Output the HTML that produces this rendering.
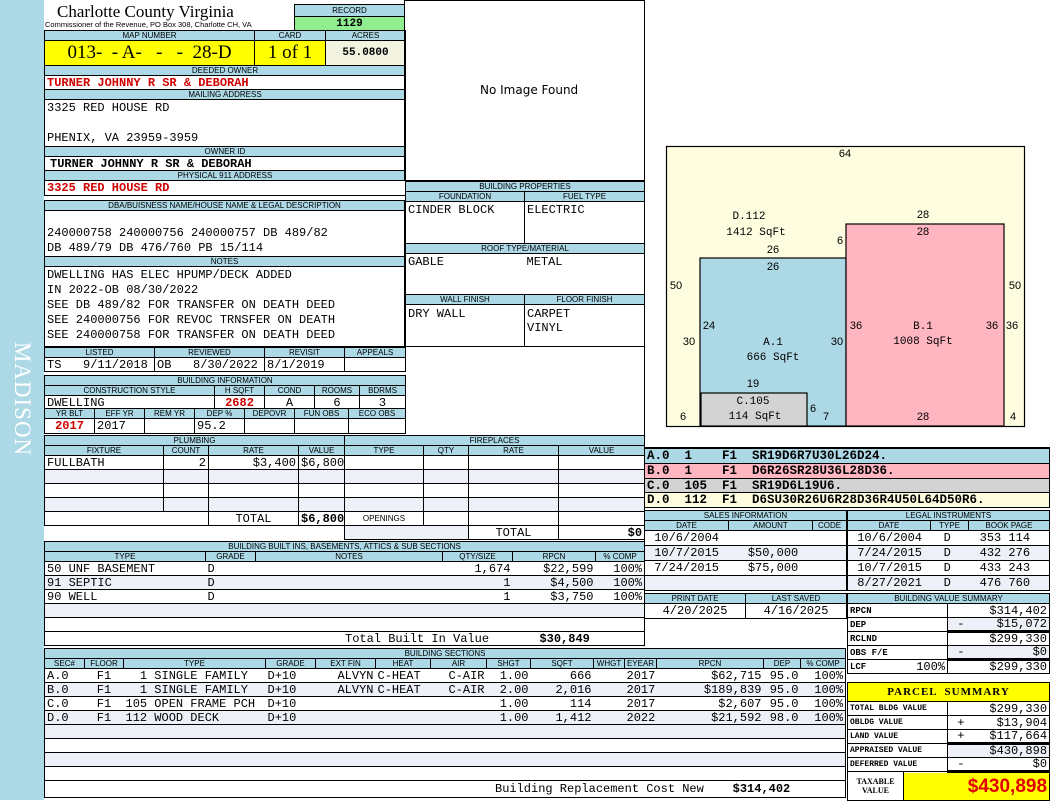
<!DOCTYPE html>
<html><head><meta charset="utf-8"><style>
*{box-sizing:border-box}
body{margin:0;width:1050px;height:800px;background:#fff;position:relative;overflow:hidden;font-family:"Liberation Mono",monospace}
#side{position:absolute;left:0;top:0;width:44px;height:800px;background:#add8e6}
#side span{position:absolute;left:22px;top:399px;transform:translate(-50%,-50%) rotate(90deg);color:#fff;font:23px "Liberation Serif",serif;letter-spacing:1px}
table{position:absolute;border-collapse:collapse;table-layout:fixed}
td{border:1px solid #000;padding:0 2px;overflow:hidden;white-space:nowrap;font-size:12px;height:14px;line-height:12px}
tr.h td,td.h{background:#add8e6;font:8px "Liberation Sans",sans-serif;text-align:center;height:10px;line-height:8px;padding:0}
tr.a td{background:#eef0f8}
tr.n td{border-left:0;border-right:0}
tr.n td:first-child{border-left:1px solid #000}
tr.n td:last-child{border-right:1px solid #000}
.r{text-align:right}.c{text-align:center}
.red{color:#d00000;font-weight:bold}
.bo{font-weight:bold}
.box{position:absolute;border:1px solid #000}
.t{position:absolute;white-space:nowrap;font-size:12px}
.p{white-space:pre}
</style></head><body>
<div id="side"><span>MADISON</span></div>

<div class="t" style="left:57px;top:2px;font:17px 'Liberation Serif',serif">Charlotte County Virginia</div>
<div class="t" style="left:45px;top:20px;font:7.5px 'Liberation Sans',sans-serif">Commissioner of the Revenue, PO Box 308, Charlotte CH, VA</div>

<table style="left:294px;top:4px;width:111px"><tr class="h"><td style="height:12px">RECORD</td></tr>
<tr><td class="c bo" style="background:#90ee90;height:14px;font-size:11px">1129</td></tr></table>

<table style="left:44px;top:30px;width:361px"><col style="width:210px"><col style="width:71px"><col style="width:80px">
<tr class="h"><td>MAP NUMBER</td><td>CARD</td><td>ACRES</td></tr>
<tr><td class="c" style="background:#ffff00;height:25px;font:19px 'Liberation Serif',serif">013- &nbsp;- A- &nbsp; - &nbsp; - &nbsp;28-D</td><td class="c" style="background:#ffff00;font:19px 'Liberation Serif',serif">1 of 1</td><td class="c bo" style="background:#f3f3e1;font-size:11px">55.0800</td></tr>
<tr class="h"><td colspan="3">DEEDED OWNER</td></tr>
<tr><td colspan="3" class="red">TURNER JOHNNY R SR &amp; DEBORAH</td></tr>
<tr class="h"><td colspan="3">MAILING ADDRESS</td></tr>
<tr><td colspan="3" style="height:45px;line-height:15px;vertical-align:top;padding-top:1px">3325 RED HOUSE RD<br><br>PHENIX, VA 23959-3959</td></tr>
<tr class="h"><td colspan="3">OWNER ID</td></tr>
<tr><td colspan="3" class="bo" style="padding-left:5px">TURNER JOHNNY R SR &amp; DEBORAH</td></tr>
<tr class="h"><td colspan="3">PHYSICAL 911 ADDRESS</td></tr>
<tr><td colspan="3" class="red" style="height:15px">3325 RED HOUSE RD</td></tr>
</table>

<table style="left:44px;top:200px;width:361px">
<tr class="h"><td>DBA/BUISNESS NAME/HOUSE NAME &amp; LEGAL DESCRIPTION</td></tr>
<tr><td style="height:46px;line-height:15px;vertical-align:bottom">240000758 240000756 240000757 DB 489/82<br>DB 489/79 DB 476/760 PB 15/114</td></tr>
<tr class="h"><td>NOTES</td></tr>
<tr><td style="height:80px;line-height:15px;vertical-align:top;padding-top:1px">DWELLING HAS ELEC HPUMP/DECK ADDED<br>IN 2022-OB 08/30/2022<br>SEE DB 489/82 FOR TRANSFER ON DEATH DEED<br>SEE 240000756 FOR REVOC TRNSFER ON DEATH<br>SEE 240000758 FOR TRANSFER ON DEATH DEED</td></tr>
</table>

<table style="left:44px;top:347px;width:361px"><col style="width:110px"><col style="width:110px"><col style="width:80px"><col style="width:61px">
<tr class="h"><td>LISTED</td><td>REVIEWED</td><td>REVISIT</td><td>APPEALS</td></tr>
<tr><td>TS &nbsp;&nbsp;9/11/2018</td><td>OB &nbsp;&nbsp;8/30/2022</td><td>8/1/2019</td><td></td></tr></table>

<table style="left:44px;top:375px;width:361px"><col style="width:170px"><col style="width:50px"><col style="width:50px"><col style="width:45px"><col style="width:46px">
<tr class="h"><td colspan="5">BUILDING INFORMATION</td></tr>
<tr class="h"><td>CONSTRUCTION STYLE</td><td>H SQFT</td><td>COND</td><td>ROOMS</td><td>BDRMS</td></tr>
<tr><td>DWELLING</td><td class="c red">2682</td><td class="c">A</td><td class="c">6</td><td class="c">3</td></tr></table>
<table style="left:44px;top:408px;width:361px"><col style="width:50px"><col style="width:50px"><col style="width:50px"><col style="width:50px"><col style="width:50px"><col style="width:54px"><col style="width:57px">
<tr class="h"><td>YR BLT</td><td>EFF YR</td><td>REM YR</td><td>DEP %</td><td>DEPOVR</td><td>FUN OBS</td><td>ECO OBS</td></tr>
<tr><td class="c red" style="height:15px">2017</td><td>2017</td><td></td><td>95.2</td><td></td><td></td><td></td></tr></table>

<table style="left:44px;top:435px;width:300px"><col style="width:119px"><col style="width:45px"><col style="width:90px"><col style="width:46px">
<tr class="h"><td colspan="4">PLUMBING</td></tr>
<tr class="h"><td>FIXTURE</td><td>COUNT</td><td>RATE</td><td>VALUE</td></tr>
<tr><td>FULLBATH</td><td class="r">2</td><td class="r">$3,400</td><td class="r">$6,800</td></tr>
<tr class="a"><td></td><td></td><td></td><td></td></tr>
<tr><td></td><td></td><td></td><td></td></tr>
<tr class="a"><td></td><td></td><td></td><td></td></tr>
<tr><td colspan="2"></td><td class="c">TOTAL</td><td class="r bo">$6,800</td></tr></table>

<table style="left:344px;top:435px;width:300px"><col style="width:79px"><col style="width:45px"><col style="width:90px"><col style="width:86px">
<tr class="h"><td colspan="4">FIREPLACES</td></tr>
<tr class="h"><td>TYPE</td><td>QTY</td><td>RATE</td><td>VALUE</td></tr>
<tr><td></td><td></td><td></td><td></td></tr>
<tr class="a"><td></td><td></td><td></td><td></td></tr>
<tr><td></td><td></td><td></td><td></td></tr>
<tr class="a"><td></td><td></td><td></td><td></td></tr>
<tr><td style="font:8px 'Liberation Sans',sans-serif;text-align:center">OPENINGS</td><td></td><td></td><td></td></tr>
<tr class="a"><td colspan="2"></td><td class="c" style="background:#fff">TOTAL</td><td class="r bo" style="background:#fff">$0</td></tr></table>

<div class="box" style="left:404px;top:0;width:241px;height:181px"></div>
<div class="t" style="left:480px;top:83px;font:12px 'DejaVu Sans',sans-serif">No Image Found</div>
<table style="left:405px;top:181px;width:239px"><col style="width:119px"><col style="width:120px">
<tr class="h"><td colspan="2">BUILDING PROPERTIES</td></tr>
<tr class="h"><td>FOUNDATION</td><td>FUEL TYPE</td></tr>
<tr><td style="height:42px;vertical-align:top;padding-top:2px">CINDER BLOCK</td><td style="vertical-align:top;padding-top:2px">ELECTRIC</td></tr>
<tr class="h"><td colspan="2">ROOF TYPE/MATERIAL</td></tr>
<tr><td style="height:41px;vertical-align:top;padding-top:2px;border-right:0">GABLE</td><td style="vertical-align:top;padding-top:2px;border-left:0">METAL</td></tr>
<tr class="h"><td>WALL FINISH</td><td>FLOOR FINISH</td></tr>
<tr><td style="height:42px;vertical-align:top;padding-top:2px;line-height:14px">DRY WALL</td><td style="vertical-align:top;padding-top:2px;line-height:14px">CARPET<br>VINYL</td></tr></table>

<table style="left:44px;top:541px;width:600px"><col style="width:161px"><col style="width:50px"><col style="width:187px"><col style="width:70px"><col style="width:83px"><col style="width:49px">
<tr class="h"><td colspan="6">BUILDING BUILT INS, BASEMENTS, ATTICS &amp; SUB SECTIONS</td></tr>
<tr class="h"><td>TYPE</td><td>GRADE</td><td>NOTES</td><td>QTY/SIZE</td><td>RPCN</td><td>% COMP</td></tr>
<tr class="n"><td>50 UNF BASEMENT</td><td>D</td><td></td><td class="r">1,674</td><td class="r">$22,599</td><td class="r">100%</td></tr>
<tr class="n a"><td>91 SEPTIC</td><td>D</td><td></td><td class="r">1</td><td class="r">$4,500</td><td class="r">100%</td></tr>
<tr class="n"><td>90 WELL</td><td>D</td><td></td><td class="r">1</td><td class="r">$3,750</td><td class="r">100%</td></tr>
<tr class="a"><td colspan="6"></td></tr>
<tr><td colspan="6"></td></tr>
<tr><td colspan="6" class="p" style="padding-left:300px">Total Built In Value       <b>$30,849</b></td></tr></table>

<table style="left:44px;top:648px;width:801px"><col style="width:40px"><col style="width:39px"><col style="width:142px"><col style="width:50px"><col style="width:60px"><col style="width:55px"><col style="width:56px"><col style="width:44px"><col style="width:63px"><col style="width:31px"><col style="width:32px"><col style="width:107px"><col style="width:37px"><col style="width:45px">
<tr class="h"><td colspan="14">BUILDING SECTIONS</td></tr>
<tr class="h"><td>SEC#</td><td>FLOOR</td><td>TYPE</td><td>GRADE</td><td>EXT FIN</td><td>HEAT</td><td>AIR</td><td>SHGT</td><td>SQFT</td><td>WHGT</td><td>EYEAR</td><td>RPCN</td><td>DEP</td><td>% COMP</td></tr>
<tr class="n"><td>A.0</td><td class="c">F1</td><td class="p">  1 SINGLE FAMILY</td><td>D+10</td><td class="r">ALVYN</td><td>C-HEAT</td><td class="r">C-AIR</td><td class="r">1.00</td><td class="r">666</td><td></td><td class="r">2017</td><td class="r">$62,715</td><td class="r">95.0</td><td class="r">100%</td></tr>
<tr class="n a"><td>B.0</td><td class="c">F1</td><td class="p">  1 SINGLE FAMILY</td><td>D+10</td><td class="r">ALVYN</td><td>C-HEAT</td><td class="r">C-AIR</td><td class="r">2.00</td><td class="r">2,016</td><td></td><td class="r">2017</td><td class="r">$189,839</td><td class="r">95.0</td><td class="r">100%</td></tr>
<tr class="n"><td>C.0</td><td class="c">F1</td><td class="p">105 OPEN FRAME PCH</td><td>D+10</td><td></td><td></td><td></td><td class="r">1.00</td><td class="r">114</td><td></td><td class="r">2017</td><td class="r">$2,607</td><td class="r">95.0</td><td class="r">100%</td></tr>
<tr class="n a"><td>D.0</td><td class="c">F1</td><td class="p">112 WOOD DECK</td><td>D+10</td><td></td><td></td><td></td><td class="r">1.00</td><td class="r">1,412</td><td></td><td class="r">2022</td><td class="r">$21,592</td><td class="r">98.0</td><td class="r">100%</td></tr>
<tr class="a"><td colspan="14"></td></tr>
<tr><td colspan="14"></td></tr>
<tr class="a"><td colspan="14"></td></tr>
<tr><td colspan="14"></td></tr>
<tr><td colspan="14" class="p" style="padding-left:450px;height:17px">Building Replacement Cost New    <b>$314,402</b></td></tr></table>

<div class="box" style="left:644px;top:0;width:406px;height:448px;border-top:0;border-right:0"></div>
<svg style="position:absolute;left:0;top:0" width="1050" height="800">
<g stroke="#000" stroke-width="1.2">
<rect x="666.5" y="146.5" width="358" height="280" fill="#fffde0"/>
<rect x="700" y="258" width="146" height="168" fill="#add8e6"/>
<rect x="846" y="224" width="158" height="202" fill="#ffb6c1"/>
<rect x="701" y="393" width="106" height="33" fill="#d3d3d3"/>
</g>
<g font-family="Liberation Sans,sans-serif" font-size="11" text-anchor="middle">
<text x="845" y="157">64</text><text x="923" y="218">28</text><text x="923" y="235">28</text><text x="840" y="244">6</text>
<text x="773" y="253">26</text><text x="773" y="270">26</text><text x="676" y="289">50</text><text x="1015" y="289">50</text>
<text x="709" y="329">24</text><text x="689" y="345">30</text><text x="837" y="345">30</text><text x="856" y="329">36</text><text x="992" y="329">36</text><text x="1012" y="329">36</text>
<text x="753" y="387">19</text><text x="683" y="420">6</text><text x="813" y="412">6</text><text x="826" y="420">7</text><text x="923" y="420">28</text><text x="1013" y="420">4</text>
</g>
<g font-family="Liberation Mono,monospace" font-size="11" text-anchor="middle">
<text x="749" y="219">D.112</text><text x="756" y="235">1412 SqFt</text>
<text x="773" y="345">A.1</text><text x="773" y="360">666 SqFt</text>
<text x="923" y="329">B.1</text><text x="923" y="344">1008 SqFt</text>
<text x="753" y="404">C.105</text><text x="755" y="419">114 SqFt</text>
</g></svg>

<table style="left:644px;top:448px;width:406px">
<tr><td class="p bo" style="background:#add8e6;height:15px;font-size:12.5px">A.0  1    F1  SR19D6R7U30L26D24.</td></tr>
<tr><td class="p bo" style="background:#ffb6c1;height:15px;font-size:12.5px">B.0  1    F1  D6R26SR28U36L28D36.</td></tr>
<tr><td class="p bo" style="background:#d3d3d3;height:14px;font-size:12.5px">C.0  105  F1  SR19D6L19U6.</td></tr>
<tr><td class="p bo" style="background:#fffde0;height:15px;font-size:12.5px">D.0  112  F1  D6SU30R26U6R28D36R4U50L64D50R6.</td></tr></table>

<table style="left:644px;top:510px;width:202px"><col style="width:84px"><col style="width:84px"><col style="width:34px">
<tr class="h"><td colspan="3">SALES INFORMATION</td></tr>
<tr class="h"><td>DATE</td><td>AMOUNT</td><td>CODE</td></tr>
<tr><td colspan="3" class="p" style="height:15px"> 10/6/2004</td></tr>
<tr class="a"><td colspan="3" class="p" style="height:15px"> 10/7/2015    $50,000</td></tr>
<tr><td colspan="3" class="p" style="height:15px"> 7/24/2015    $75,000</td></tr>
<tr class="a"><td colspan="3" style="height:15px"></td></tr></table>

<table style="left:847px;top:510px;width:202px"><col style="width:83px"><col style="width:38px"><col style="width:81px">
<tr class="h"><td colspan="3">LEGAL INSTRUMENTS</td></tr>
<tr class="h"><td>DATE</td><td>TYPE</td><td>BOOK PAGE</td></tr>
<tr><td colspan="3" class="p" style="height:15px"> 10/6/2004   D    353 114</td></tr>
<tr class="a"><td colspan="3" class="p" style="height:15px"> 7/24/2015   D    432 276</td></tr>
<tr><td colspan="3" class="p" style="height:15px"> 10/7/2015   D    433 243</td></tr>
<tr class="a"><td colspan="3" class="p" style="height:15px"> 8/27/2021   D    476 760</td></tr></table>

<table style="left:644px;top:593px;width:202px"><col style="width:101px"><col style="width:101px">
<tr class="h"><td>PRINT DATE</td><td>LAST SAVED</td></tr>
<tr><td class="c" style="height:15px">4/20/2025</td><td class="c">4/16/2025</td></tr></table>

<table style="left:847px;top:593px;width:202px"><col style="width:100px"><col style="width:102px">
<tr class="h"><td colspan="2">BUILDING VALUE SUMMARY</td></tr>
<tr><td style="font-size:9px" class="bo">RPCN</td><td class="r">$314,402</td></tr>
<tr class="a"><td style="font-size:9px;background:#fff" class="bo">DEP</td><td style="border-bottom:3px solid #000">&nbsp;-<span style="float:right">$15,072</span></td></tr>
<tr><td style="font-size:9px" class="bo">RCLND</td><td class="r">$299,330</td></tr>
<tr class="a"><td style="font-size:9px;background:#fff" class="bo">OBS F/E</td><td style="border-bottom:3px solid #000">&nbsp;-<span style="float:right">$0</span></td></tr>
<tr><td style="font-size:9px" class="bo">LCF<span style="float:right;font-size:12px;font-weight:normal">100%</span></td><td class="r">$299,330</td></tr></table>

<table style="left:847px;top:682px;width:202px"><col style="width:56px"><col style="width:44px"><col style="width:102px">
<tr><td colspan="3" class="c bo" style="background:#ffff00;height:19px;font:bold 11px 'Liberation Serif',serif;letter-spacing:1px">PARCEL &nbsp;SUMMARY</td></tr>
<tr><td colspan="2" style="font-size:8px" class="bo">TOTAL BLDG VALUE</td><td class="r">$299,330</td></tr>
<tr><td colspan="2" style="font-size:8px" class="bo">OBLDG VALUE</td><td>&nbsp;+<span style="float:right">$13,904</span></td></tr>
<tr><td colspan="2" style="font-size:8px" class="bo">LAND VALUE</td><td style="border-bottom:3px solid #000">&nbsp;+<span style="float:right">$117,664</span></td></tr>
<tr class="a"><td colspan="2" style="font-size:8px;background:#fff" class="bo">APPRAISED VALUE</td><td class="r">$430,898</td></tr>
<tr><td colspan="2" style="font-size:8px" class="bo">DEFERRED VALUE</td><td style="border-bottom:3px solid #000">&nbsp;-<span style="float:right">$0</span></td></tr>
<tr><td class="c bo" style="font:bold 8px/9px 'Liberation Serif',serif;height:29px">TAXABLE<br>VALUE</td><td colspan="2" class="r" style="background:#ffff00;color:#e00000;font:bold 19px 'Liberation Sans',sans-serif">$430,898</td></tr></table>
</body></html>
